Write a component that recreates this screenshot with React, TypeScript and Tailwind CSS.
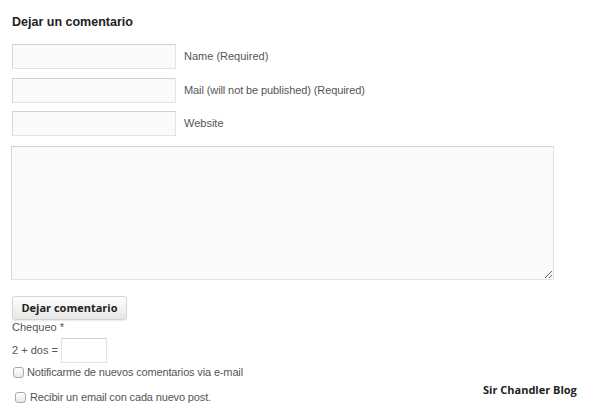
export default function App() {
  const inputCls =
    "w-[164px] h-[25px] bg-[#fafafa] border border-[#e3e3e3] border-t-[#d0d0d0] border-l-[#d6d6d6] outline-none shrink-0";

  return (
    <div
      className="relative w-[590px] h-[409px] bg-white pl-3 pt-[14px] text-[#555] overflow-hidden whitespace-nowrap"
      style={{ fontFamily: '"Liberation Sans", Arial, sans-serif' }}
    >
      <h3 className="text-[12.5px] leading-[16px] font-bold text-[#222] mb-[14px]">Dejar un comentario</h3>

      <div className="flex items-center gap-2 mb-[9px]">
        <input className={inputCls} />
        <span className="text-[11px]">Name (Required)</span>
      </div>
      <div className="flex items-center gap-2 mb-[8px]">
        <input className={inputCls} />
        <span className="text-[11px] tracking-[-0.1px]">Mail (will not be published) (Required)</span>
      </div>
      <div className="flex items-center gap-2">
        <input className={inputCls} />
        <span className="text-[11px]">Website</span>
      </div>

      <textarea className="block mt-[10px] -ml-px w-[543px] h-[134px] bg-[#fafafa] border border-[#e3e3e3] border-t-[#d0d0d0] border-l-[#d6d6d6] outline-none resize" />

      <button
        className="block mt-4 w-[115px] h-[24px] rounded-[3px] border border-[#d4d4d4] bg-gradient-to-b from-white to-[#e6e6e6] text-[11px] font-bold text-[#222] shadow-[0_1px_1px_rgba(0,0,0,0.08)] whitespace-nowrap"
        style={{ fontFamily: '"Open Sans", "DejaVu Sans", sans-serif' }}
      >
        Dejar comentario
      </button>

      <div className="text-[11px] leading-[14px]">Chequeo *</div>
      <div className="flex items-center gap-[3px] mt-[4px]">
        <span className="text-[11px]">2 + dos =</span>
        <input className="w-[46px] h-[25px] bg-white border border-[#e3e3e3] border-t-[#d0d0d0] outline-none" />
      </div>

      <label className="flex items-center gap-[3px] mt-[2px] ml-px text-[11px] leading-[14px] tracking-[-0.15px]">
        <span className="w-[11px] h-[11px] rounded-[3px] border border-[#aaa] bg-gradient-to-b from-white to-[#e8e8e8]" />
        Notificarme de nuevos comentarios via e-mail
      </label>
      <label className="flex items-center gap-[4px] mt-[11px] ml-[3px] text-[11px] leading-[14px] tracking-[-0.15px]">
        <span className="w-[11px] h-[11px] rounded-[3px] border border-[#aaa] bg-gradient-to-b from-white to-[#e8e8e8]" />
        Recibir un email con cada nuevo post.
      </label>

      <div
        className="absolute left-[483px] top-[383px] text-[11px] leading-[14px] font-bold text-[#222]"
        style={{ fontFamily: '"Open Sans", "DejaVu Sans", sans-serif' }}
      >
        Sir Chandler Blog
      </div>
    </div>
  );
}
